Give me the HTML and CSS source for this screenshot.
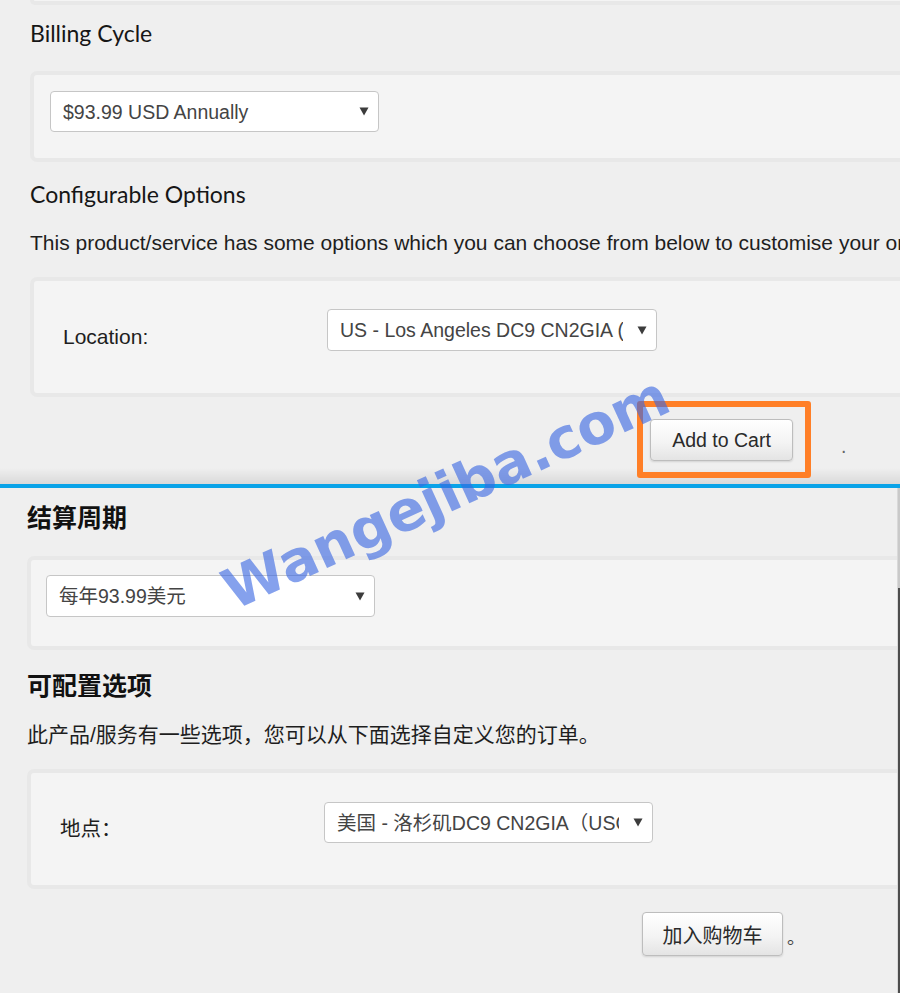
FILE: index.html
```html
<!DOCTYPE html>
<html lang="zh-CN">
<head>
<meta charset="utf-8">
<title>Billing Cycle / 结算周期</title>
<link rel="stylesheet" href="styles.css">
</head>
<body>
<div class="page">
  <section class="shot shot-en">
    <div class="prev-well"></div>
    <h2 class="title-en">Billing Cycle</h2>
    <div class="well well-billing-en">
      <div class="select sel-billing">
        <span class="sel-text">$93.99 USD Annually</span>
        <svg class="caret" width="10" height="9" viewBox="0 0 10 9"><path d="M0.5 0.5H9.5L5 8.5Z"/></svg>
      </div>
    </div>
    <h2 class="title-en title-gap">Configurable Options</h2>
    <p class="intro-en">This product/service has some options which you can choose from below to customise your order.</p>
    <div class="well well-options-en">
      <div class="opt-row">
        <label class="opt-label-en">Location:</label>
        <div class="select sel-loc">
          <span class="sel-text">US - Los Angeles DC9 CN2GIA (USA Optimized)</span>
          <svg class="caret" width="10" height="9" viewBox="0 0 10 9"><path d="M0.5 0.5H9.5L5 8.5Z"/></svg>
        </div>
      </div>
    </div>
    <div class="actions actions-en">
      <span class="highlight"><button class="btn btn-en" type="button">Add to Cart</button></span>
      <span class="dot-en">.</span>
    </div>
  </section>

  <div class="divider"></div>

  <section class="shot shot-cn">
    <div class="cn-body">
      <h2 class="title-cn">结算周期</h2>
      <div class="well well-billing-cn">
        <div class="select sel-billing sel-cn">
          <span class="sel-text">每年93.99美元</span>
          <svg class="caret" width="10" height="9" viewBox="0 0 10 9"><path d="M0.5 0.5H9.5L5 8.5Z"/></svg>
        </div>
      </div>
      <h2 class="title-cn title-cn-gap">可配置选项</h2>
      <p class="intro-cn">此产品/服务有一些选项，您可以从下面选择自定义您的订单。</p>
      <div class="well well-options-cn">
        <div class="opt-row">
          <label class="opt-label-cn">地点：</label>
          <div class="select sel-loc sel-cn">
            <span class="sel-text">美国 - 洛杉矶DC9 CN2GIA（USC优化）</span>
            <svg class="caret" width="10" height="9" viewBox="0 0 10 9"><path d="M0.5 0.5H9.5L5 8.5Z"/></svg>
          </div>
        </div>
      </div>
      <div class="actions actions-cn">
        <button class="btn btn-cn" type="button">加入购物车</button>
        <span class="dot-cn">。</span>
      </div>
    </div>
    <div class="edge"></div>
  </section>

  <div class="watermark">Wangejiba.com</div>
</div>
</body>
</html>
```

FILE: styles.css
```css
*, *::before, *::after { box-sizing: border-box; }

html, body {
  margin: 0;
  padding: 0;
  background: #efefef;
}

.page {
  position: relative;
  width: 900px;
  height: 993px;
  overflow: hidden;
  background: #efefef;
  color: #1e1e1e;
  font-family: "Liberation Sans", "Noto Sans CJK SC", sans-serif;
}

.shot {
  overflow: hidden;
}

/* ---------- English screenshot ---------- */
.shot-en {
  display: flex;
  flex-direction: column;
  align-items: flex-start;
  padding: 0 0 23px 30px;
  height: 484px;
  background:
    linear-gradient(to bottom, rgba(0,0,0,0), rgba(0,0,0,0.09)) left bottom / 100% 16px no-repeat,
    #efefef;
}

.prev-well {
  width: 1000px;
  height: 5px;
  background: #f4f4f4;
  border-bottom: 4px solid #e8e8e8;
  border-left: 4px solid #e8e8e8;
  border-radius: 0 0 0 7px;
  flex: none;
}

.title-en {
  margin: 14px 0 0;
  font-family: Lato, "Open Sans", sans-serif;
  font-weight: 400;
  font-size: 23px;
  line-height: 28px;
  color: #161616;
  flex: none;
}

.title-gap { margin-top: 18px; }

.intro-en {
  margin: 23px 0 0;
  font-size: 21px;
  line-height: 24px;
  white-space: nowrap;
  color: #1e1e1e;
  flex: none;
}

.well {
  width: 1000px;
  background: #f4f4f4;
  border: 4px solid #e8e8e8;
  border-radius: 7px;
  flex: none;
}

.well-billing-en {
  margin-top: 24px;
  padding: 16px 16px 26px 16px;
}

.well-options-en {
  margin-top: 22px;
  padding: 28px 16px 42px 29px;
}

.opt-row {
  display: flex;
  align-items: flex-start;
}

.opt-label-en {
  width: 264px;
  margin-top: 16px;
  font-size: 21px;
  line-height: 24px;
  color: #1e1e1e;
}

/* select boxes */
.select {
  display: flex;
  align-items: center;
  background: #fff;
  border: 1px solid #c6c6c6;
  border-radius: 4px;
  padding: 0 9px 0 12px;
  font-size: 19.5px;
  color: #444;
}

.sel-text {
  flex: 1;
  min-width: 0;
  overflow: hidden;
  white-space: nowrap;
  line-height: 24px;
}

.caret {
  flex: none;
  margin-left: 14px;
  fill: #3c3c3c;
}

.sel-billing { width: 329px; height: 41px; }
.sel-loc { width: 330px; height: 42px; }

/* buttons */
.actions {
  display: flex;
  align-items: flex-start;
  flex: none;
}

.actions-en {
  margin-top: 22px;
  padding-left: 620px;
}

.highlight {
  position: relative;
  display: block;
}

.highlight::after {
  content: "";
  position: absolute;
  left: -13px;
  top: -18px;
  width: 174px;
  height: 77px;
  border: 6px solid #ff7f27;
  border-radius: 3px;
  pointer-events: none;
}

.btn {
  display: block;
  margin: 0;
  padding: 0;
  font-family: "Liberation Sans", "Noto Sans CJK SC", sans-serif;
  font-size: 19.5px;
  color: #2a2a2a;
  background: linear-gradient(to bottom, #ffffff 0%, #f4f4f4 55%, #e4e4e4 100%);
  border: 1px solid #bdbdbd;
  border-radius: 4px;
  box-shadow: 0 1px 2px rgba(0,0,0,0.12);
}

.btn-en { width: 143px; height: 42px; }

.dot-en {
  margin: 15px 0 0 48px;
  font-size: 19.5px;
  line-height: 24px;
  color: #666;
}

/* ---------- divider ---------- */
.divider {
  height: 4px;
  background: #0aa3e8;
}

/* ---------- Chinese screenshot ---------- */
.shot-cn {
  display: flex;
  height: 505px;
}

.cn-body {
  flex: 1;
  min-width: 0;
  overflow: hidden;
  display: flex;
  flex-direction: column;
  align-items: flex-start;
  padding-left: 27px;
}

.edge {
  flex: none;
  width: 3px;
  background: linear-gradient(to bottom, #c9c9c9 0, #c9c9c9 100px, #4d4d4d 100px);
  border-left: 1px solid #d9d9d9;
}

.title-cn {
  margin: 13px 0 0;
  font-family: "Noto Sans CJK SC", sans-serif;
  font-weight: 700;
  font-size: 25px;
  line-height: 30px;
  color: #111;
  flex: none;
}

.title-cn-gap { margin-top: 19px; }

.intro-cn {
  margin: 24px 0 0;
  font-size: 21px;
  line-height: 24px;
  white-space: nowrap;
  color: #1e1e1e;
  flex: none;
}

.well-billing-cn {
  margin-top: 25px;
  padding: 15px 15px 29px 15px;
}

.well-options-cn {
  margin-top: 22px;
  padding: 29px 15px 42px 29px;
}

.sel-cn.sel-billing { width: 329px; height: 42px; }
.sel-cn.sel-loc { width: 329px; height: 41px; }

.opt-label-cn {
  width: 264px;
  margin-top: 15px;
  font-size: 20.5px;
  line-height: 24px;
  color: #1e1e1e;
}

.actions-cn {
  margin-top: 23px;
  padding-left: 615px;
}

.btn-cn { width: 141px; height: 44px; font-size: 20px; }

.dot-cn {
  margin: 14px 0 0 4px;
  font-size: 18px;
  line-height: 24px;
  color: #444;
}

/* ---------- watermark overlay ---------- */
.watermark {
  position: absolute;
  left: 446px;
  top: 493px;
  transform: translate(-50%, -50%) rotate(-24.5deg);
  font-family: "DejaVu Sans", sans-serif;
  font-weight: 700;
  font-size: 56px;
  line-height: 56px;
  white-space: nowrap;
  color: rgba(58, 104, 226, 0.62);
  pointer-events: none;
  z-index: 5;
}
```
